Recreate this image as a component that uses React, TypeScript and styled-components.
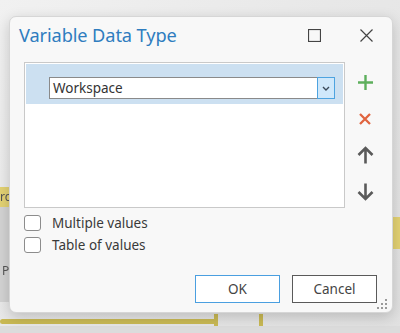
import React from "react";
import styled, { createGlobalStyle } from "styled-components";

const GlobalStyle = createGlobalStyle`
	html, body {
		margin: 0;
		padding: 0;
		background: #e6e6e6;
	}
	* {
		box-sizing: border-box;
	}
`;

const Canvas = styled.div`
	position: relative;
	width: 400px;
	height: 333px;
	overflow: hidden;
	padding: 16px 7px 20px 9px;
	background: linear-gradient(135deg, #f1f1f1 0%, #e8e8e8 45%, #e1e1e1 100%);
	font-family: "Noto Sans", "Open Sans", sans-serif;
`;

const Blur = styled.div<{ $x: number; $y: number; $w: number; $h: number; $c: string; $r?: number }>`
	position: absolute;
	left: ${(p) => p.$x}px;
	top: ${(p) => p.$y}px;
	width: ${(p) => p.$w}px;
	height: ${(p) => p.$h}px;
	background: ${(p) => p.$c};
	border-radius: ${(p) => p.$r ?? 0}px;
	filter: blur(0.6px);
`;

const BlurText = styled.span<{ $x: number; $y: number }>`
	position: absolute;
	left: ${(p) => p.$x}px;
	top: ${(p) => p.$y}px;
	font-size: 12px;
	color: #555;
	filter: blur(0.4px);
`;

const Dialog = styled.div`
	position: relative;
	z-index: 1;
	width: 384px;
	height: 297px;
	background: #f8f8f8;
	border: 1px solid #d6d6d6;
	border-radius: 7px;
	box-shadow: 0 4px 14px rgba(0, 0, 0, 0.18);
	display: flex;
	flex-direction: column;
`;

const Header = styled.div`
	height: 45px;
	display: flex;
	align-items: flex-start;
	padding: 6px 0 0 9px;
`;

const Title = styled.h1`
	flex: 1;
	margin: 0;
	font-size: 18.2px;
	line-height: 24px;
	font-weight: 400;
	color: #2f7dbf;
	letter-spacing: -0.1px;
`;

const WinButton = styled.button`
	width: 52px;
	height: 32px;
	border: none;
	background: transparent;
	display: flex;
	align-items: center;
	justify-content: center;
	padding: 0;
	margin-top: -4px;
`;

const Body = styled.div`
	display: flex;
	padding: 0 0 0 14px;
`;

const List = styled.div`
	width: 321px;
	height: 146px;
	background: #fff;
	border: 1px solid #c9c9c9;
	padding: 1px;
`;

const Row = styled.div<{ $selected?: boolean }>`
	height: 40px;
	background: ${(p) => (p.$selected ? "#cce0f1" : "transparent")};
	display: flex;
	align-items: flex-end;
	padding: 0 8px 5px 23px;
`;

const Combo = styled.div`
	flex: 1;
	height: 22px;
	background: #fff;
	border: 1px solid #8a8a8a;
	display: flex;
	align-items: stretch;
`;

const ComboText = styled.span`
	flex: 1;
	font-size: 13.5px;
	color: #333;
	line-height: 20px;
	padding-left: 3px;
`;

const ComboArrow = styled.span`
	width: 18px;
	margin: -1px -1px -1px 0;
	background: #cfe8fb;
	border: 1px solid #4da3e0;
	display: flex;
	align-items: center;
	justify-content: center;
`;

const Toolbar = styled.div`
	width: 40px;
	display: flex;
	flex-direction: column;
	align-items: center;
	padding-top: 2px;
`;

const ToolButton = styled.button`
	width: 30px;
	height: 36.5px;
	border: none;
	background: transparent;
	padding: 0;
	display: flex;
	align-items: center;
	justify-content: center;
`;

const Options = styled.div`
	display: flex;
	flex-direction: column;
	gap: 6px;
	padding: 5px 0 0 14px;
`;

const CheckRow = styled.label`
	display: flex;
	align-items: center;
	gap: 11px;
	font-size: 13.5px;
	color: #3a3a3a;
	height: 16px;
`;

const Box = styled.span`
	width: 17px;
	height: 16px;
	border: 1px solid #8c8c8c;
	border-radius: 3px;
	background: #fff;
`;

const Footer = styled.div`
	position: relative;
	flex: 1;
	display: flex;
	justify-content: flex-end;
	align-items: flex-end;
	gap: 12px;
	padding: 0 15px 9px 0;
`;

const Button = styled.button<{ $primary?: boolean }>`
	width: 85px;
	height: 28px;
	background: #fff;
	border: 1px solid ${(p) => (p.$primary ? "#4a9fe0" : "#5a5a5a")};
	border-radius: 0;
	font-family: inherit;
	font-size: 13.5px;
	color: #444;
	padding: 0 0 1px;
`;

const Grip = styled.svg`
	position: absolute;
	right: 4px;
	bottom: 2px;
`;

const MaxIcon = () => (
	<svg width="13" height="13" viewBox="0 0 13 13">
		<rect x="0.5" y="0.5" width="12" height="12" fill="none" stroke="#444" strokeWidth="1.2" />
	</svg>
);

const CloseIcon = () => (
	<svg width="13" height="13" viewBox="0 0 13 13">
		<path d="M0.5 0.5 L12.5 12.5 M12.5 0.5 L0.5 12.5" stroke="#444" strokeWidth="1.2" />
	</svg>
);

const PlusIcon = () => (
	<svg width="17" height="17" viewBox="0 0 17 17">
		<path d="M8.5 1 V16 M1 8.5 H16" stroke="#5daf5c" strokeWidth="2.4" />
	</svg>
);

const RemoveIcon = () => (
	<svg width="12" height="12" viewBox="0 0 12 12">
		<path d="M1 1 L11 11 M11 1 L1 11" stroke="#e0643f" strokeWidth="2.3" />
	</svg>
);

const UpIcon = () => (
	<svg width="17" height="18" viewBox="0 0 17 18">
		<path d="M8.5 2 V17.5 M1.5 9 L8.5 2 L15.5 9" fill="none" stroke="#5a5a5a" strokeWidth="2.6" />
	</svg>
);

const DownIcon = () => (
	<svg width="17" height="18" viewBox="0 0 17 18">
		<path d="M8.5 0.5 V16 M1.5 9 L8.5 16 L15.5 9" fill="none" stroke="#5a5a5a" strokeWidth="2.6" />
	</svg>
);

const Chevron = () => (
	<svg width="8" height="5" viewBox="0 0 8 5">
		<path d="M1 1 L4 4 L7 1" fill="none" stroke="#3b4a5a" strokeWidth="1.4" />
	</svg>
);

const dots = [
	[10, 1],
	[6, 5],
	[10, 5],
	[2, 9],
	[6, 9],
	[10, 9],
];

const App = () => {
	return (
		<>
			<GlobalStyle />
			<Canvas>
				<Blur $x={0} $y={187} $w={9} $h={20} $c="#e3d273" />
				<BlurText $x={0} $y={188}>rc</BlurText>
				<Blur $x={0} $y={207} $w={9} $h={95} $c="#d3d3d3" />
				<BlurText $x={2} $y={262}>P</BlurText>
				<Blur $x={393} $y={217} $w={7} $h={32} $c="#e3d273" />
				<Blur $x={0} $y={319} $w={218} $h={5} $c="#c9b954" $r={3} />
				<Blur $x={214} $y={314} $w={4} $h={19} $c="#c9b954" />
				<Blur $x={259} $y={314} $w={4} $h={19} $c="#c9b954" />
				<Blur $x={0} $y={326} $w={400} $h={7} $c="#dcdcdc" />
				<Dialog>
					<Header>
						<Title>Variable Data Type</Title>
						<WinButton>
							<MaxIcon />
						</WinButton>
						<WinButton>
							<CloseIcon />
						</WinButton>
					</Header>
					<Body>
						<List>
							<Row $selected>
								<Combo>
									<ComboText>Workspace</ComboText>
									<ComboArrow>
										<Chevron />
									</ComboArrow>
								</Combo>
							</Row>
						</List>
						<Toolbar>
							<ToolButton>
								<PlusIcon />
							</ToolButton>
							<ToolButton>
								<RemoveIcon />
							</ToolButton>
							<ToolButton>
								<UpIcon />
							</ToolButton>
							<ToolButton>
								<DownIcon />
							</ToolButton>
						</Toolbar>
					</Body>
					<Options>
						<CheckRow>
							<Box />
							Multiple values
						</CheckRow>
						<CheckRow>
							<Box />
							Table of values
						</CheckRow>
					</Options>
					<Footer>
						<Button $primary>OK</Button>
						<Button>Cancel</Button>
						<Grip width="13" height="12" viewBox="0 0 13 12">
							{dots.map(([x, y]) => (
								<rect key={`${x}-${y}`} x={x} y={y} width="2" height="2" fill="#9a9a9a" />
							))}
						</Grip>
					</Footer>
				</Dialog>
			</Canvas>
		</>
	);
};

export default App;
